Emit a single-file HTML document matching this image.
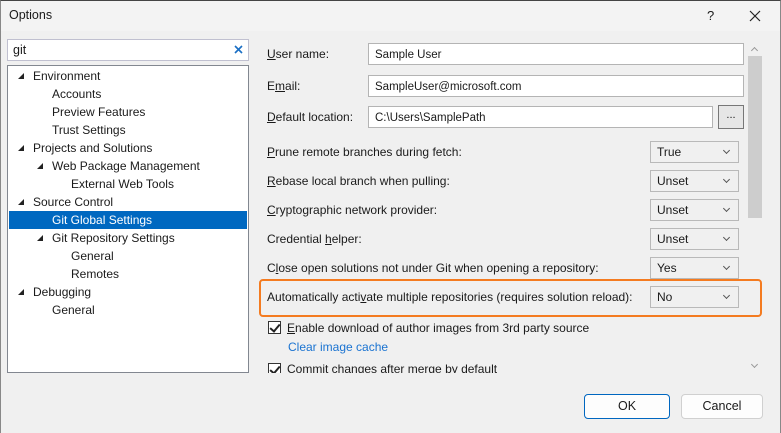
<!DOCTYPE html><html><head><style>
*{margin:0;padding:0;box-sizing:border-box}
body{width:781px;height:433px;overflow:hidden;background:#f0f0f0;font-family:"Liberation Sans",sans-serif;font-size:12px;color:#1a1a1a;position:relative}
.a{position:absolute;white-space:nowrap}
.frame{position:absolute;left:0;top:0;width:781px;height:433px;border-top:1px solid #444;border-left:1px solid #888;border-right:1px solid #888;pointer-events:none}
.title{left:0;top:0;width:781px;height:31px;background:#f3f3f3}
.tree{left:7px;top:65px;width:242px;height:308px;background:#fff;border:1px solid #828790}
.row{position:absolute;left:0;width:240px;height:18px;line-height:18px}
.tri{position:absolute;width:0;height:0;border-left:6px solid transparent;border-bottom:6px solid #222;top:6px}
.inp{background:#fff;border:1px solid #b4b4b4;height:22px;line-height:21px;padding-left:6px;padding-top:1px;font-size:11.5px}
.cb{background:#f0f0f0;border:1px solid #b9b9b9;width:89px;height:22px;line-height:20px;padding-left:6px}
.cb:after{content:"";position:absolute;right:9px;top:6px;width:4px;height:4px;border-right:1px solid #555;border-bottom:1px solid #555;transform:rotate(45deg)}
u{text-decoration:underline}
.chk{width:13px;height:13px;border:1px solid #333;background:#fff}
.chk:after{content:"";position:absolute;left:3px;top:0px;width:4px;height:8px;border-right:2px solid #222;border-bottom:2px solid #222;transform:rotate(40deg)}
.btn{height:25px;line-height:23px;text-align:center;background:#fdfdfd;border:1px solid #d0d0d0;border-radius:4px;font-size:12.5px}
</style></head><body>
<div class="a title"></div>
<div class="a" style="left:9px;top:8px;font-size:12.5px">Options</div>
<div class="a" style="left:707px;top:8px;font-size:13px">?</div>
<svg class="a" style="left:749px;top:10px" width="12" height="12"><path d="M1 1L11 11M11 1L1 11" stroke="#222" stroke-width="1.2"/></svg>

<div class="a inp" style="left:7px;top:39px;width:242px;height:22px;border-color:#c0c0d0;padding-left:5px;padding-top:0;line-height:20px;font-size:12.5px">git</div>
<svg class="a" style="left:234px;top:45px" width="9" height="9"><path d="M1 1L8 8M8 1L1 8" stroke="#1a6fc4" stroke-width="1.6"/></svg>

<div class="a tree">
<div class="row" style="top:1px"><span class="tri" style="left:10px"></span><span class="a" style="left:25px">Environment</span></div>
<div class="row" style="top:19px"><span class="a" style="left:44px">Accounts</span></div>
<div class="row" style="top:37px"><span class="a" style="left:44px">Preview Features</span></div>
<div class="row" style="top:55px"><span class="a" style="left:44px">Trust Settings</span></div>
<div class="row" style="top:73px"><span class="tri" style="left:10px"></span><span class="a" style="left:25px">Projects and Solutions</span></div>
<div class="row" style="top:91px"><span class="tri" style="left:29px"></span><span class="a" style="left:44px">Web Package Management</span></div>
<div class="row" style="top:109px"><span class="a" style="left:63px">External Web Tools</span></div>
<div class="row" style="top:127px"><span class="tri" style="left:10px"></span><span class="a" style="left:25px">Source Control</span></div>
<div class="row" style="top:145px;left:1px;width:238px;background:#0068c0;color:#fff"><span class="a" style="left:43px">Git Global Settings</span></div>
<div class="row" style="top:163px"><span class="tri" style="left:29px"></span><span class="a" style="left:44px">Git Repository Settings</span></div>
<div class="row" style="top:181px"><span class="a" style="left:63px">General</span></div>
<div class="row" style="top:199px"><span class="a" style="left:63px">Remotes</span></div>
<div class="row" style="top:217px"><span class="tri" style="left:10px"></span><span class="a" style="left:25px">Debugging</span></div>
<div class="row" style="top:235px"><span class="a" style="left:44px">General</span></div>
</div>

<div class="a" style="left:267px;top:47px"><u>U</u>ser name:</div>
<div class="a inp" style="left:368px;top:43px;width:376px">Sample User</div>
<div class="a" style="left:267px;top:79px">E<u>m</u>ail:</div>
<div class="a inp" style="left:368px;top:75px;width:376px">SampleUser@microsoft.com</div>
<div class="a" style="left:267px;top:110px"><u>D</u>efault location:</div>
<div class="a inp" style="left:368px;top:106px;width:345px">C:\Users\SamplePath</div>
<div class="a" style="left:718px;top:105px;width:26px;height:24px;border:1px solid #777;background:#e6e6e6;text-align:center;line-height:18px;font-size:11px">...</div>

<div class="a" style="left:267px;top:145px"><u>P</u>rune remote branches during fetch:</div>
<div class="a cb" style="left:650px;top:141px">True</div>
<div class="a" style="left:267px;top:174px"><u>R</u>ebase local branch when pulling:</div>
<div class="a cb" style="left:650px;top:170px">Unset</div>
<div class="a" style="left:267px;top:203px"><u>C</u>ryptographic network provider:</div>
<div class="a cb" style="left:650px;top:199px">Unset</div>
<div class="a" style="left:267px;top:232px">Credential <u>h</u>elper:</div>
<div class="a cb" style="left:650px;top:228px">Unset</div>
<div class="a" style="left:267px;top:261px">C<u>l</u>ose open solutions not under Git when opening a repository:</div>
<div class="a cb" style="left:650px;top:257px">Yes</div>
<div class="a" style="left:259px;top:279px;width:503px;height:38px;border:2px solid #f47b20;border-radius:4px"></div>
<div class="a" style="left:267px;top:290px">Automatically acti<u>v</u>ate multiple repositories (requires solution reload):</div>
<div class="a cb" style="left:650px;top:286px">No</div>
<div class="a chk" style="left:268px;top:321px"></div>
<div class="a" style="left:287px;top:321px"><u>E</u>nable download of author images from 3rd party source</div>
<div class="a" style="left:288px;top:340px;color:#1a73d1">Clear image cache</div>
<div class="a" style="left:260px;top:360px;width:490px;height:13px;overflow:hidden">
<div class="a chk" style="left:8px;top:3px"></div>
<div class="a" style="left:27px;top:2px">Commit changes after merge by default</div></div>

<div class="a" style="left:748px;top:56px;width:14px;height:162px;background:#cdcdcd"></div>
<div class="a" style="left:752px;top:48px;width:5px;height:5px;border-left:1px solid #999;border-top:1px solid #999;transform:rotate(45deg)"></div>
<div class="a" style="left:752px;top:362px;width:5px;height:5px;border-right:1px solid #999;border-bottom:1px solid #999;transform:rotate(45deg)"></div>

<div class="a btn" style="left:584px;top:394px;width:86px;border:1px solid #0067c0">OK</div>
<div class="a btn" style="left:681px;top:394px;width:82px">Cancel</div>
<div class="frame"></div>
</body></html>
